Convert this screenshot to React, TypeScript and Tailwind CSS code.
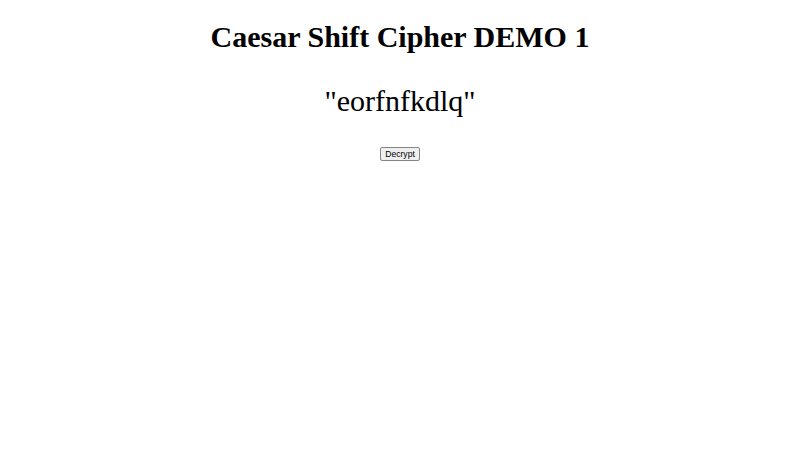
export default function App() {
  return (
    <div className="min-h-[450px] bg-white text-center text-black font-['Liberation_Serif',serif]">
      <h1 className="pt-[20px] text-[30px] font-bold leading-[34px]">Caesar Shift Cipher DEMO 1</h1>
      <p className="mt-[30px] text-[30px] leading-[34px]">"eorfnfkdlq"</p>
      <div className="mt-[26px] leading-none">
        <button className="rounded-[2px] border border-[#858585] bg-[#efefef] px-[4px] py-px font-['Liberation_Sans',sans-serif] text-[8.6px] leading-[10px]">
          Decrypt
        </button>
      </div>
    </div>
  );
}
